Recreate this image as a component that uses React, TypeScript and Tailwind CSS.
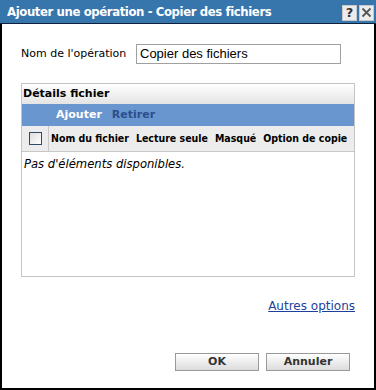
import React from "react";

export default function App() {
  const f = { fontFamily: '"DejaVu Sans", Verdana, sans-serif' };
  return (
    <div className="w-[376px] h-[390px] bg-white flex flex-col" style={f}>
      <div className="h-[24px] bg-[#3775ad] border-b border-[#10203a] flex items-center justify-between pl-[7px] pr-[2px] shrink-0">
        <span className="text-white font-bold text-[13px] tracking-[-0.4px]" style={{ fontFamily: '"DejaVu Sans Condensed", "DejaVu Sans", sans-serif' }}>
          Ajouter une opération - Copier des fichiers
        </span>
        <div className="flex gap-[2px] mt-[2px]">
          <div className="w-[15px] h-[16px] bg-[#ececec] border border-[#c8c8c8] flex items-center justify-center text-[13px] font-bold text-[#333] leading-none">?</div>
          <div className="w-[15px] h-[16px] bg-[#ececec] border border-[#c8c8c8] flex items-center justify-center">
            <svg width="11" height="11" viewBox="0 0 11 11"><path d="M1.5 1.5 L9.5 9.5 M9.5 1.5 L1.5 9.5" stroke="#555" strokeWidth="1.8" /></svg>
          </div>
        </div>
      </div>
      <div className="flex-1 border-x-2 border-b-2 border-black flex flex-col pl-[19px] pr-[19px]">
        <div className="flex items-center mt-[20px] h-[20px]">
          <span className="text-[11px] text-black w-[115px]">Nom de l'opération</span>
          <div className="w-[205px] h-[20px] border border-[#a0a0a0] flex items-center pl-[3px] text-[13px] text-black" style={{ fontFamily: '"Liberation Sans", Arial, sans-serif' }}>
            Copier des fichiers
          </div>
        </div>
        <div className="mt-[19px] w-[334px] h-[194px] border border-[#c4c4c4] flex flex-col overflow-hidden">
          <div className="h-[20px] bg-gradient-to-b from-white to-[#e4e4e4] flex items-center pl-[1px] text-[11px] font-bold text-black">Détails fichier</div>
          <div className="h-[22px] bg-[#6a96cf] flex items-center pl-[34px] gap-[10px] text-[11px] font-bold">
            <span className="text-white">Ajouter</span>
            <span className="text-[#2a4f8c]">Retirer</span>
          </div>
          <div className="h-[26px] bg-[#ececec] border-b border-[#c8c8c8] flex items-center text-[10.5px] font-bold text-black" style={{ fontFamily: '"DejaVu Sans Condensed", "DejaVu Sans", sans-serif' }}>
            <div className="w-[27px] shrink-0 h-full border-r border-[#c8c8c8] flex items-center justify-center">
              <div className="w-[13px] h-[13px] border border-[#2d4a6b] bg-gradient-to-br from-[#dcdcdc] to-white" />
            </div>
            <div className="flex gap-[7px] pl-[2px] whitespace-nowrap">
              <span>Nom du fichier</span>
              <span>Lecture seule</span>
              <span>Masqué</span>
              <span>Option de copie</span>
            </div>
          </div>
          <div className="pl-[2px] pt-[4px] text-[11.6px] italic text-black">Pas d'éléments disponibles.</div>
        </div>
        <div className="flex justify-end mt-[20px] w-[334px]">
          <span className="text-[12px] text-[#1f3f9a] underline">Autres options</span>
        </div>
        <div className="flex justify-end gap-[7px] mt-[38px] w-[329px]">
          <div className="w-[84px] h-[18px] border border-[#999] bg-gradient-to-b from-white to-[#dcdcdc] flex items-center justify-center text-[11px] font-bold text-[#333]">OK</div>
          <div className="w-[84px] h-[18px] border border-[#999] bg-gradient-to-b from-white to-[#dcdcdc] flex items-center justify-center text-[11px] font-bold text-[#333]">Annuler</div>
        </div>
      </div>
    </div>
  );
}
